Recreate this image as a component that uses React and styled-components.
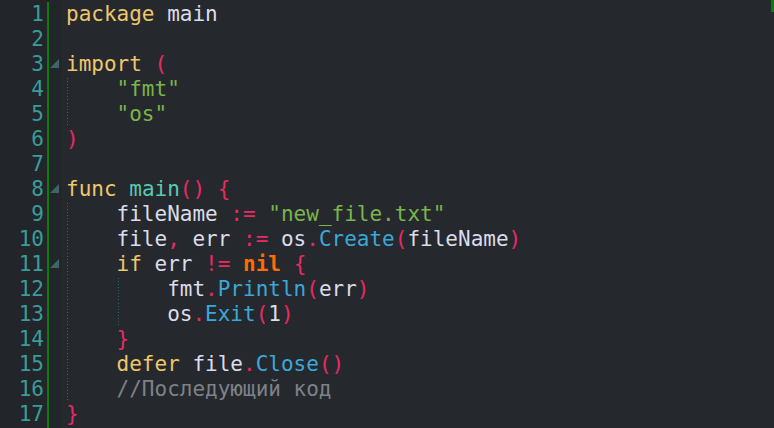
import styled, { createGlobalStyle } from 'styled-components';

const GlobalStyle = createGlobalStyle`
  html, body {
    margin: 0;
    padding: 0;
    background: #25292d;
    overflow: hidden;
  }
`;

const COLORS = {
  kw: '#eec66b',
  id: '#dcdcea',
  fn: '#5cc8b4',
  pu: '#ea2a62',
  str: '#7bb44c',
  nil: '#ff6a0a',
  me: '#3ca7da',
  cm: '#7e8288',
};

// each line: indent level, fold marker, tokens [kind, text]
const LINES = [
  { tokens: [['kw', 'package'], ['id', ' main']] },
  { tokens: [] },
  { fold: true, tokens: [['kw', 'import'], ['id', ' '], ['pu', '(']] },
  { indent: 1, tokens: [['str', '"fmt"']] },
  { indent: 1, tokens: [['str', '"os"']] },
  { tokens: [['pu', ')']] },
  { tokens: [] },
  { fold: true, tokens: [['kw', 'func'], ['id', ' '], ['fn', 'main'], ['pu', '()'], ['id', ' '], ['pu', '{']] },
  { indent: 1, tokens: [['id', 'fileName '], ['pu', ':='], ['id', ' '], ['str', '"new_file.txt"']] },
  {
    indent: 1,
    tokens: [
      ['id', 'file'], ['pu', ','], ['id', ' err '], ['pu', ':='], ['id', ' os'], ['pu', '.'],
      ['me', 'Create'], ['pu', '('], ['id', 'fileName'], ['pu', ')'],
    ],
  },
  {
    indent: 1,
    fold: true,
    tokens: [['kw', 'if'], ['id', ' err '], ['pu', '!='], ['id', ' '], ['nil', 'nil'], ['id', ' '], ['pu', '{']],
  },
  { indent: 2, tokens: [['id', 'fmt'], ['pu', '.'], ['me', 'Println'], ['pu', '('], ['id', 'err'], ['pu', ')']] },
  { indent: 2, tokens: [['id', 'os'], ['pu', '.'], ['me', 'Exit'], ['pu', '('], ['id', '1'], ['pu', ')']] },
  { indent: 1, tokens: [['pu', '}']] },
  { indent: 1, tokens: [['kw', 'defer'], ['id', ' file'], ['pu', '.'], ['me', 'Close'], ['pu', '()']] },
  { indent: 1, tokens: [['cm', '//Последующий код']] },
  { tokens: [['pu', '}']] },
];

const Editor = styled.div`
  position: relative;
  display: flex;
  width: 774px;
  height: 428px;
  background: #25292d;
  font-family: 'DejaVu Sans Mono', monospace;
  font-size: 21px;
  overflow: hidden;
`;

const Gutter = styled.div`
  display: flex;
  background: #22262a;
  padding-top: 2px;
`;

const Numbers = styled.div`
  display: flex;
  flex-direction: column;
  width: 47px;
`;

const Number = styled.div`
  height: 25px;
  line-height: 25px;
  padding-right: 3px;
  text-align: right;
  color: #3a9c9a;
`;

const ChangeBar = styled.div`
  width: 2px;
  background: #0b7d0b;
`;

const Folds = styled.div`
  display: flex;
  flex-direction: column;
  width: 13px;
`;

const FoldCell = styled.div`
  height: 25px;
  display: flex;
  align-items: center;
  padding-left: 1px;
`;

const FoldMark = styled.svg`
  width: 9px;
  height: 9px;
  margin-top: -3px;
`;

const Code = styled.div`
  flex: 1;
  display: flex;
  flex-direction: column;
  padding: 2px 0 0 4px;
`;

const Line = styled.div`
  display: flex;
  height: 25px;
  line-height: 25px;
  white-space: pre;
`;

const Indent = styled.span`
  width: 4ch;
  flex-shrink: 0;
  background-image: linear-gradient(to bottom, #1e6f70 1px, transparent 1px);
  background-size: 1px 3px;
  background-repeat: repeat-y;
  background-position: 1px 1px;
`;

const Token = styled.span`
  color: ${p => COLORS[p.$kind]};
  font-weight: ${p => (p.$kind === 'nil' ? 'bold' : 'normal')};
`;

const ScrollMark = styled.div`
  position: absolute;
  top: 0;
  right: 0;
  width: 3px;
  height: 12px;
  background: #0b7d0b;
`;

const App = () => (
  <>
    <GlobalStyle />
    <Editor>
      <Gutter>
        <Numbers>
          {LINES.map((_, i) => (
            <Number key={i}>{i + 1}</Number>
          ))}
        </Numbers>
        <ChangeBar />
        <Folds>
          {LINES.map((line, i) => (
            <FoldCell key={i}>
              {line.fold && (
                <FoldMark viewBox="0 0 9 9">
                  <polygon points="9,0 9,9 0,9" fill="#3d6467" />
                </FoldMark>
              )}
            </FoldCell>
          ))}
        </Folds>
      </Gutter>
      <Code>
        {LINES.map((line, i) => (
          <Line key={i}>
            {Array.from({ length: line.indent || 0 }).map((_, j) => (
              <Indent key={j} />
            ))}
            {line.tokens.map(([kind, text], j) => (
              <Token key={j} $kind={kind}>{text}</Token>
            ))}
          </Line>
        ))}
      </Code>
      <ScrollMark />
    </Editor>
  </>
);

export default App;
